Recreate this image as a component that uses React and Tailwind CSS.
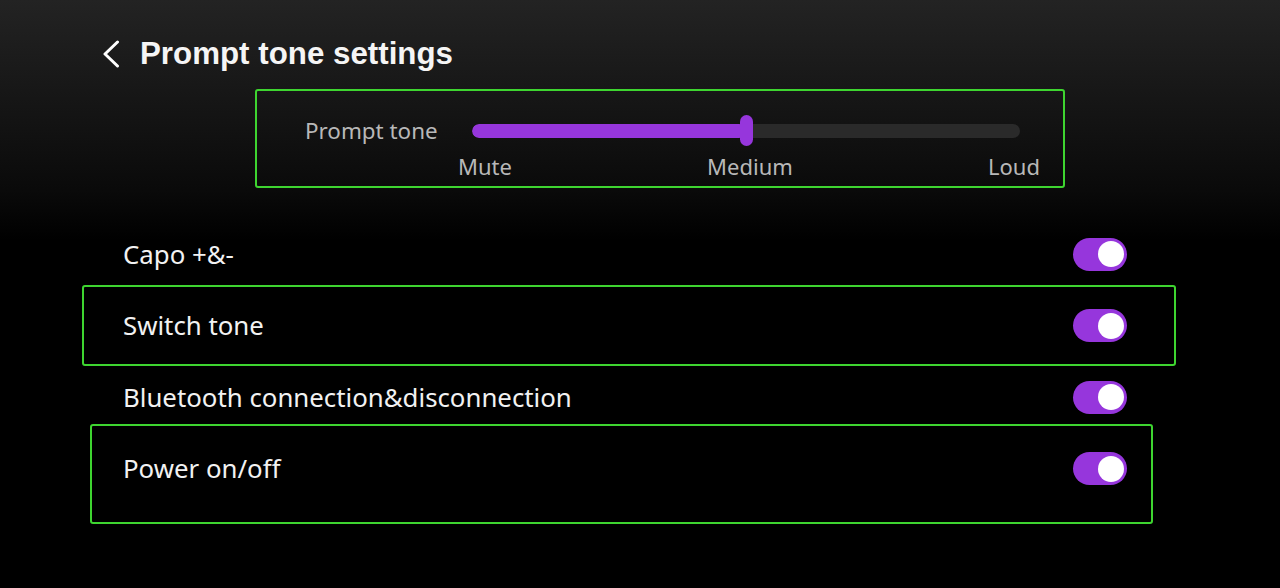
import { useState } from 'react'

const rows = [
  { id: 'capo', label: 'Capo +&-' },
  { id: 'switch', label: 'Switch tone' },
  { id: 'bt', label: 'Bluetooth connection&disconnection' },
  { id: 'power', label: 'Power on/off' },
]

function Toggle({ on, onChange }) {
  return (
    <button
      onClick={onChange}
      className={`w-[54px] h-[33px] rounded-full flex items-center px-[3px] shrink-0 ${
        on ? 'bg-[#9636dc] justify-end' : 'bg-[#3a3a3a] justify-start'
      }`}
    >
      <span className="w-[26px] h-[26px] rounded-full bg-white block" />
    </button>
  )
}

export default function App() {
  const [level, setLevel] = useState(50)
  const [toggles, setToggles] = useState({ capo: true, switch: true, bt: true, power: true })

  const flip = (id) => setToggles({ ...toggles, [id]: !toggles[id] })

  return (
    <div className="w-full h-[588px] overflow-hidden bg-[linear-gradient(180deg,#232323_0px,#0a0a0a_190px,#000_240px)] text-white font-['Noto_Sans',sans-serif]">
      <div className="flex items-center h-[40px] mt-[34px] pl-[101px]">
        <svg width="20" height="28" viewBox="0 0 20 28" fill="none">
          <polyline points="16.5,2 4,14 16.5,26" stroke="white" strokeWidth="3" strokeLinecap="round" strokeLinejoin="round" />
        </svg>
        <h1 className="ml-[19px] text-[31.3px] leading-[40px] font-bold font-['Liberation_Sans',Arial,sans-serif] text-[#f5f5f5]">
          Prompt tone settings
        </h1>
      </div>

      <div className="ml-[255px] mt-[15px] w-[810px] h-[99px] border-2 border-[#3ed530] rounded-[3px] pl-[48px] pr-[23px] flex">
        <div className="w-[153px] pt-[24px] text-[22.4px] leading-[31px] text-[#b8b8b8]">Prompt tone</div>
        <div className="flex-1 flex flex-col pt-[24px]">
          <div className="relative ml-[14px] mr-[20px] h-[31px] flex items-center">
            <div className="w-full h-[14px] rounded-full bg-[#2a2a2a] overflow-hidden">
              <div className="h-full rounded-full bg-[#9636dc]" style={{ width: `${level}%` }} />
            </div>
            <div
              className="absolute top-0 w-[13px] h-[31px] rounded-full bg-[#9636dc] -ml-[6px]"
              style={{ left: `${level}%` }}
              onClick={() => setLevel(level === 50 ? 100 : 50)}
            />
          </div>
          <div className="mt-[5px] flex justify-between text-[22px] leading-[30px] text-[#b8b8b8]">
            <span>Mute</span>
            <span>Medium</span>
            <span>Loud</span>
          </div>
        </div>
      </div>

      <div className="mt-[35px] text-[25.8px] text-[#f2f2f2]">
        <div className="h-[62px] pl-[123px] w-[1127px] flex items-center justify-between">
          <span>{rows[0].label}</span>
          <Toggle on={toggles.capo} onChange={() => flip('capo')} />
        </div>
        <div className="ml-[82px] w-[1094px] h-[81px] border-2 border-[#3ed530] rounded-[3px] pl-[39px] pr-[47px] flex items-center justify-between">
          <span>{rows[1].label}</span>
          <Toggle on={toggles.switch} onChange={() => flip('switch')} />
        </div>
        <div className="h-[58px] pt-[4px] pl-[123px] w-[1127px] flex items-center justify-between">
          <span>{rows[2].label}</span>
          <Toggle on={toggles.bt} onChange={() => flip('bt')} />
        </div>
        <div className="ml-[90px] w-[1063px] h-[100px] border-2 border-[#3ed530] rounded-[3px] pl-[31px] pr-[24px] pt-[26px]">
          <div className="h-[33px] flex items-center justify-between">
            <span>{rows[3].label}</span>
            <Toggle on={toggles.power} onChange={() => flip('power')} />
          </div>
        </div>
      </div>
    </div>
  )
}
